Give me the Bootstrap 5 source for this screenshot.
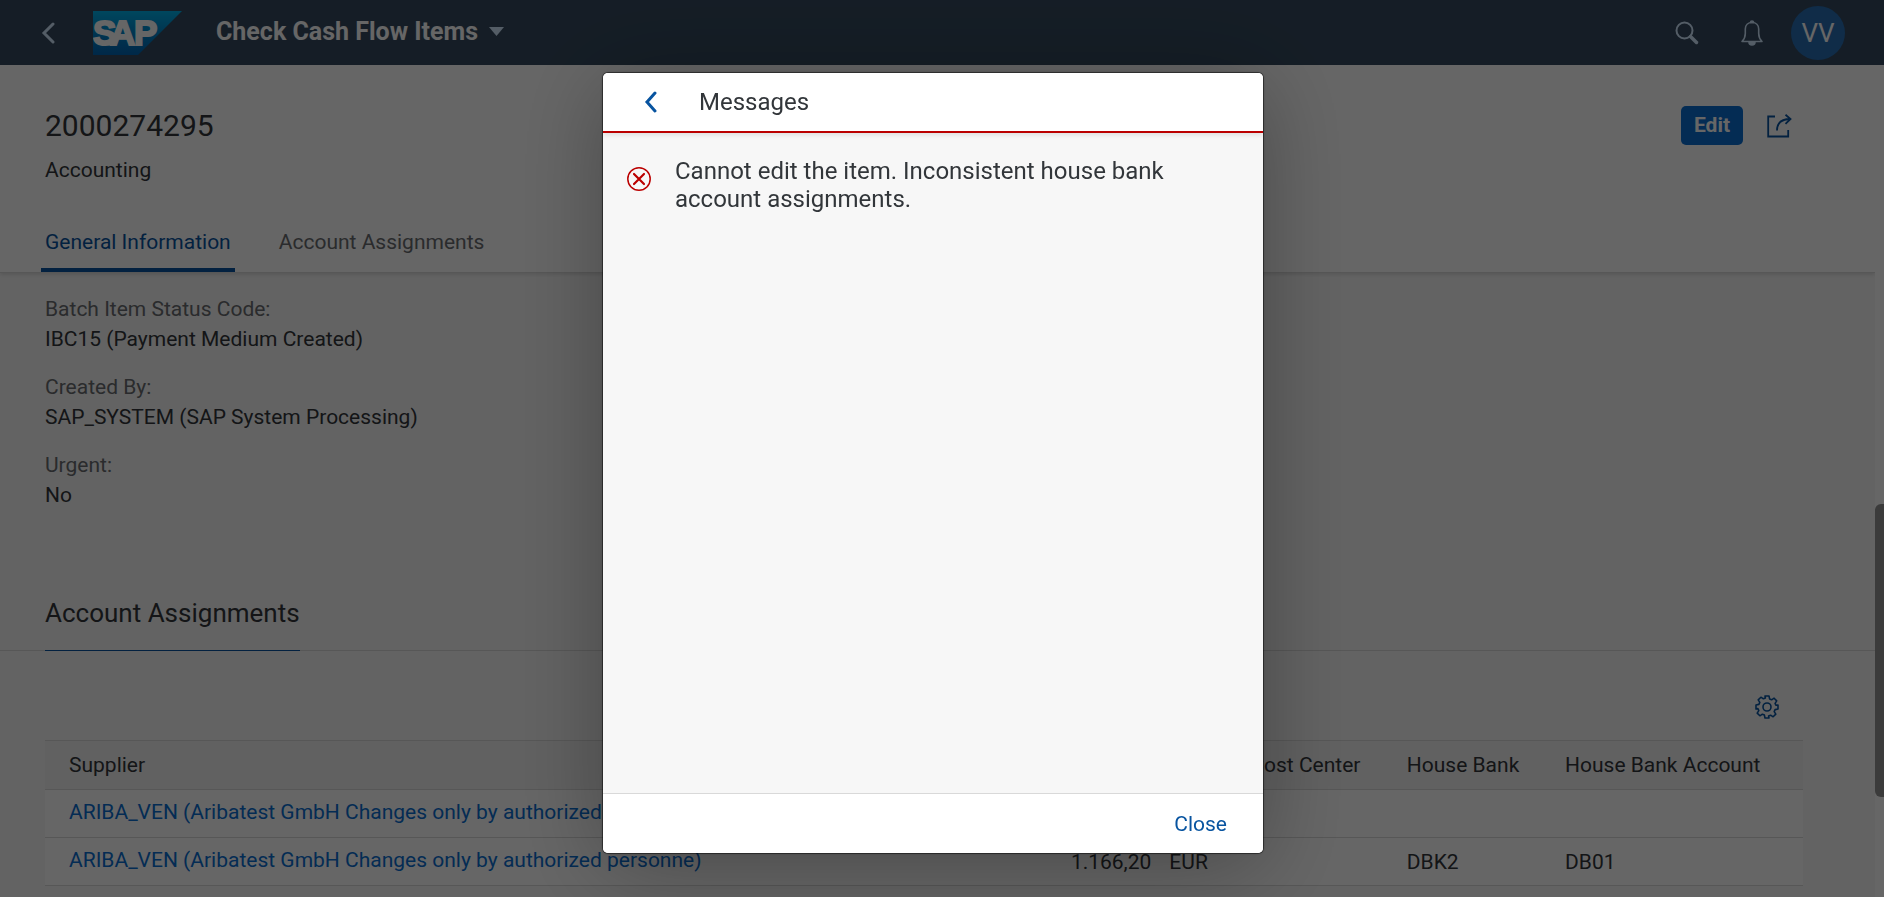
<!DOCTYPE html>
<html lang="en">
<head>
<meta charset="utf-8">
<meta name="viewport" content="width=device-width, initial-scale=1">
<title>Check Cash Flow Items</title>
<link href="https://cdn.jsdelivr.net/npm/bootstrap@5.3.0/dist/css/bootstrap.min.css" rel="stylesheet">
<style>
  body { font-family: Roboto, "Open Sans", sans-serif; font-size: 21px; line-height: 30px; color: #32363a; background: #fff; }
  svg { display: block; fill: none; }
  a { color: #0a6ed1; text-decoration: none; }
  .icon-btn { padding: 0; border: 0; background: none; color: #0854a0; }

  /* shell bar */
  .shell { height: 65px; padding: 0 39px 0 41px; background: #354a5f; color: #d1e8ff; flex-wrap: nowrap; }
  .shell .icon-btn { color: #d1e8ff; }
  .shell-title { border: 0; padding: 0 0 2px; background: none; color: #fff; font-size: 25px; font-weight: 700; line-height: 30px; }
  .avatar { width: 54px; height: 54px; border: 0; background: #286eb4; color: #fff; font-size: 26px; }
  .shell-logo { margin-left: 38px; margin-right: 34px; }

  /* object page */
  .page-scroll { height: calc(100vh - 65px); overflow: hidden; }
  .page-main { background: #f7f7f7; }
  .page-head { background: #fff; padding: 41px 72px 0 45px; border-bottom: 1px solid #d9d9d9; box-shadow: 0 2px 3px rgba(0,0,0,.1); }
  .object-id { font-size: 30px; line-height: 40px; font-weight: 400; margin: 0; }
  .object-type { padding-top: 9px; }
  .btn-edit { background: #0a6ed1; border: 0; color: #fff; border-radius: 5px; width: 62px; height: 39px; padding: 0; font-size: 21px; font-weight: 700; }
  .page-tabs { gap: 40px; margin: 30px 0 0 -4px; }
  .page-tabs .nav-link { padding: 12px 4px 11px; color: #6a6d70; line-height: 30px; border-bottom: 4px solid transparent; }
  .page-tabs .nav-link.active { color: #0854a0; border-bottom-color: #0854a0; }
  .fields { padding: 21px 45px 0; margin: 0; }
  .fields dt { font-weight: 400; color: #6a6d70; }
  .fields dd { margin-bottom: 18px; }
  .section-bar { padding: 0 45px; margin-top: 86px; border-bottom: 1px solid #d9d9d9; }
  .section-bar h2 { display: inline-block; font-size: 26px; line-height: 34px; font-weight: 400; margin: 0 0 -1px; padding-bottom: 20px; border-bottom: 1px solid #0854a0; vertical-align: top; }
  .section-body { padding: 44px 72px 0 45px; }
  .items { table-layout: fixed; margin: 21px 0 0; --bs-table-bg: #fff; --bs-table-color: #32363a; border-color: #e0e0e0; }
  .items th { font-weight: 400; height: 49px; padding: 0 0 0 24px; vertical-align: middle; background: #f2f2f2; border: 1px solid #d9d9d9; border-width: 1px 0; line-height: 30px; }
  .items td { height: 48px; padding: 0 0 0 24px; vertical-align: middle; border-bottom: 1px solid #d9d9d9; line-height: 30px; white-space: nowrap; }
  .items tbody tr > :first-child { padding-bottom: 4px; }
  .currency { width: 57px; margin-left: 18px; }

  .bar-track { width: 9px; flex: none; background: #fff; }
  .bar-thumb { height: 293px; margin-top: 439px; border-radius: 6px 0 0 6px; background: #949494; }

  /* message dialog */
  .modal-backdrop { --bs-backdrop-opacity: .6; }
  .modal { padding-right: 18px; overflow: hidden; }
  .modal-dialog { max-width: 660px; margin: 73px auto 0; height: calc(100vh - 117px); }
  .modal-content { height: 100%; border: 0; border-radius: 5px; overflow: hidden; background: #f7f7f7; color: #32363a; }
  .dialog-shadow { border-radius: 5px; box-shadow: 0 0 0 1px rgba(0,0,0,.42), 0 0 3px rgba(0,0,0,.4), 0 12px 90px rgba(0,0,0,.3); }
  .modal-header { height: 60px; padding: 0 41px; background: #fff; border-bottom: 2px solid #bb0000; border-radius: 0; gap: 42px; justify-content: flex-start; box-shadow: 0 2px 5px rgba(0,0,0,.1); }
  .modal-title { font-size: 24px; line-height: 30px; font-weight: 400; }
  .modal-body { padding: 24px; gap: 24px; }
  .modal-body p { font-size: 24px; line-height: 28px; margin: 0; max-width: 500px; }
  .modal-body svg { flex: none; margin-top: 10px; color: #bb0000; }
  .modal-footer { height: 60px; padding: 0 36px; background: #fff; border-top: 1px solid #d9d9d9; border-radius: 0; }
  .btn-close-text { border: 0; padding: 0; margin: 0; background: none; color: #0854a0; line-height: 30px; }
</style>
</head>
<body class="modal-open overflow-hidden">

<header class="shell navbar">
  <div class="d-flex align-items-center">
    <button class="icon-btn" type="button" aria-label="Back">
      <svg width="14" height="22" viewBox="0 0 14 22" stroke="currentColor" stroke-width="3" stroke-linecap="round"><path d="M12 2 3 11l9 9"/></svg>
    </button>
    <a class="shell-logo" href="#" aria-label="SAP home">
      <svg width="89" height="44" viewBox="0 0 89 44">
        <defs><linearGradient id="logoFill" x1="0" y1="0" x2="0" y2="1"><stop offset="0" stop-color="#00b1eb"/><stop offset=".5" stop-color="#0085ca"/><stop offset="1" stop-color="#0064b4"/></linearGradient></defs>
        <path d="M0 0h89L45 44H0z" fill="url(#logoFill)"/>
        <text y="34" x="0 17 41" fill="#fff" stroke="#fff" stroke-width="2" font-family="Liberation Sans, sans-serif" font-weight="700" font-size="35">SAP</text>
      </svg>
    </a>
    <button class="shell-title d-flex align-items-center" type="button">Check Cash Flow Items
      <svg class="ms-2" width="24" height="10" viewBox="0 0 24 10"><path d="M3 0h15l-7.500 9z" fill="#d1e8ff"/></svg>
    </button>
  </div>
  <div class="d-flex align-items-center">
    <button class="icon-btn me-3" type="button" aria-label="Search">
      <svg width="24" height="24" viewBox="0 0 24 24" stroke="currentColor"><circle cx="9.500" cy="9.500" r="8" stroke-width="2"/><path d="m15.500 15.500 6 6" stroke-width="3.500" stroke-linecap="round"/></svg>
    </button>
    <button class="icon-btn ms-4 me-4" type="button" aria-label="Notifications">
      <svg width="28" height="26" viewBox="-2 0 28 26" stroke="currentColor" stroke-width="1.600" stroke-linejoin="round"><path d="M1 21.500c2-2 3.300-4 3.300-8V9C4.300 5 7 2.500 11 2.500S17.700 5 17.700 9v4.500c0 4 1.300 6 3.300 8z"/><path d="M9.500 2.500a1.500 1.500 0 0 1 3 0zM8 22a3 3 0 0 0 6 0z" fill="currentColor"/></svg>
    </button>
    <button class="avatar rounded-circle p-0" type="button">VV</button>
  </div>
</header>

<div class="page-scroll d-flex">
  <main class="page-main flex-grow-1">
    <div class="page-head">
      <div class="d-flex justify-content-between">
        <div>
          <h1 class="object-id">2000274295</h1>
          <div class="object-type">Accounting</div>
        </div>
        <div class="d-flex align-items-center align-self-start">
          <button class="btn btn-edit" type="button">Edit</button>
          <button class="icon-btn ms-4 me-2" type="button" aria-label="Share">
            <svg width="28" height="24" viewBox="0 0 28 24" stroke="currentColor" stroke-width="1.800"><path d="M8 2.500H1.200v20h20V16"/><path d="M10 16.500c0-7 4-11.500 13.500-11.500M18.500.800 23.500 5l-5 4.800"/></svg>
          </button>
        </div>
      </div>
      <nav class="nav page-tabs" aria-label="Sections">
        <a class="nav-link active" href="#general">General Information</a>
        <a class="nav-link" href="#assignments">Account Assignments</a>
      </nav>
    </div>

    <dl class="fields" id="general">
      <dt>Batch Item Status Code:</dt><dd>IBC15 (Payment Medium Created)</dd>
      <dt>Created By:</dt><dd>SAP_SYSTEM (SAP System Processing)</dd>
      <dt>Urgent:</dt><dd>No</dd>
    </dl>

    <div class="section-bar" id="assignments"><h2>Account Assignments</h2></div>
    <div class="section-body">
      <div class="d-flex justify-content-end pe-4">
        <button class="icon-btn" type="button" aria-label="Table settings">
          <svg width="24" height="24" viewBox="0 0 24 24" stroke="currentColor" stroke-width="1.600" stroke-linejoin="round"><circle cx="12" cy="12" r="4"/><path d="M10 1h4l.6 2.900 2 .9 2.500-1.600 2.600 2.700-1.600 2.500.8 1.900L23 10v4l-2.900.6-.9 2 1.600 2.500-2.700 2.700-2.500-1.600-2 .9L14 23h-4l-.6-2.900-2-.9-2.500 1.600-2.700-2.700 1.600-2.500-.9-2L1 14v-4l2.900-.6.9-2-1.600-2.500 2.700-2.700 2.500 1.600 2-.9z"/></svg>
        </button>
      </div>
      <table class="table items">
        <colgroup><col style="width:54%"><col style="width:13.200%"><col style="width:8.900%"><col style="width:9%"><col></colgroup>
        <thead>
          <tr><th>Supplier</th><th></th><th>Cost Center</th><th>House Bank</th><th>House Bank Account</th></tr>
        </thead>
        <tbody>
          <tr><td><a href="#">ARIBA_VEN (Aribatest GmbH Changes only by authorized personne)</a></td><td></td><td></td><td></td><td></td></tr>
          <tr><td><a href="#">ARIBA_VEN (Aribatest GmbH Changes only by authorized personne)</a></td><td><div class="d-flex justify-content-end"><span>1.166,20</span><span class="currency">EUR</span></div></td><td></td><td>DBK2</td><td>DB01</td></tr>
        </tbody>
      </table>
    </div>
  </main>
  <div class="bar-track"><div class="bar-thumb"></div></div>
</div>

<div class="modal-backdrop show"></div>
<div class="modal d-block" tabindex="-1" role="dialog" aria-modal="true" aria-labelledby="dialogTitle">
  <div class="modal-dialog dialog-shadow">
    <div class="modal-content">
      <div class="modal-header">
        <button class="icon-btn" type="button" aria-label="Back to list">
          <svg width="13" height="22" viewBox="0 0 13 22" stroke="currentColor" stroke-width="3" stroke-linecap="round"><path d="M11 2 3 11l8 9"/></svg>
        </button>
        <h2 class="modal-title" id="dialogTitle">Messages</h2>
      </div>
      <div class="modal-body d-flex align-items-start">
        <svg width="24" height="24" viewBox="0 0 24 24" stroke="currentColor"><circle cx="12" cy="12" r="11.200" stroke-width="1.500"/><path d="m7 7 10 10M17 7 7 17" stroke-width="2.200" stroke-linecap="round"/></svg>
        <p>Cannot edit the item. Inconsistent house bank account assignments.</p>
      </div>
      <div class="modal-footer">
        <button class="btn-close-text" type="button">Close</button>
      </div>
    </div>
  </div>
</div>

<script src="https://cdn.jsdelivr.net/npm/bootstrap@5.3.0/dist/js/bootstrap.bundle.min.js"></script>
</body>
</html>
